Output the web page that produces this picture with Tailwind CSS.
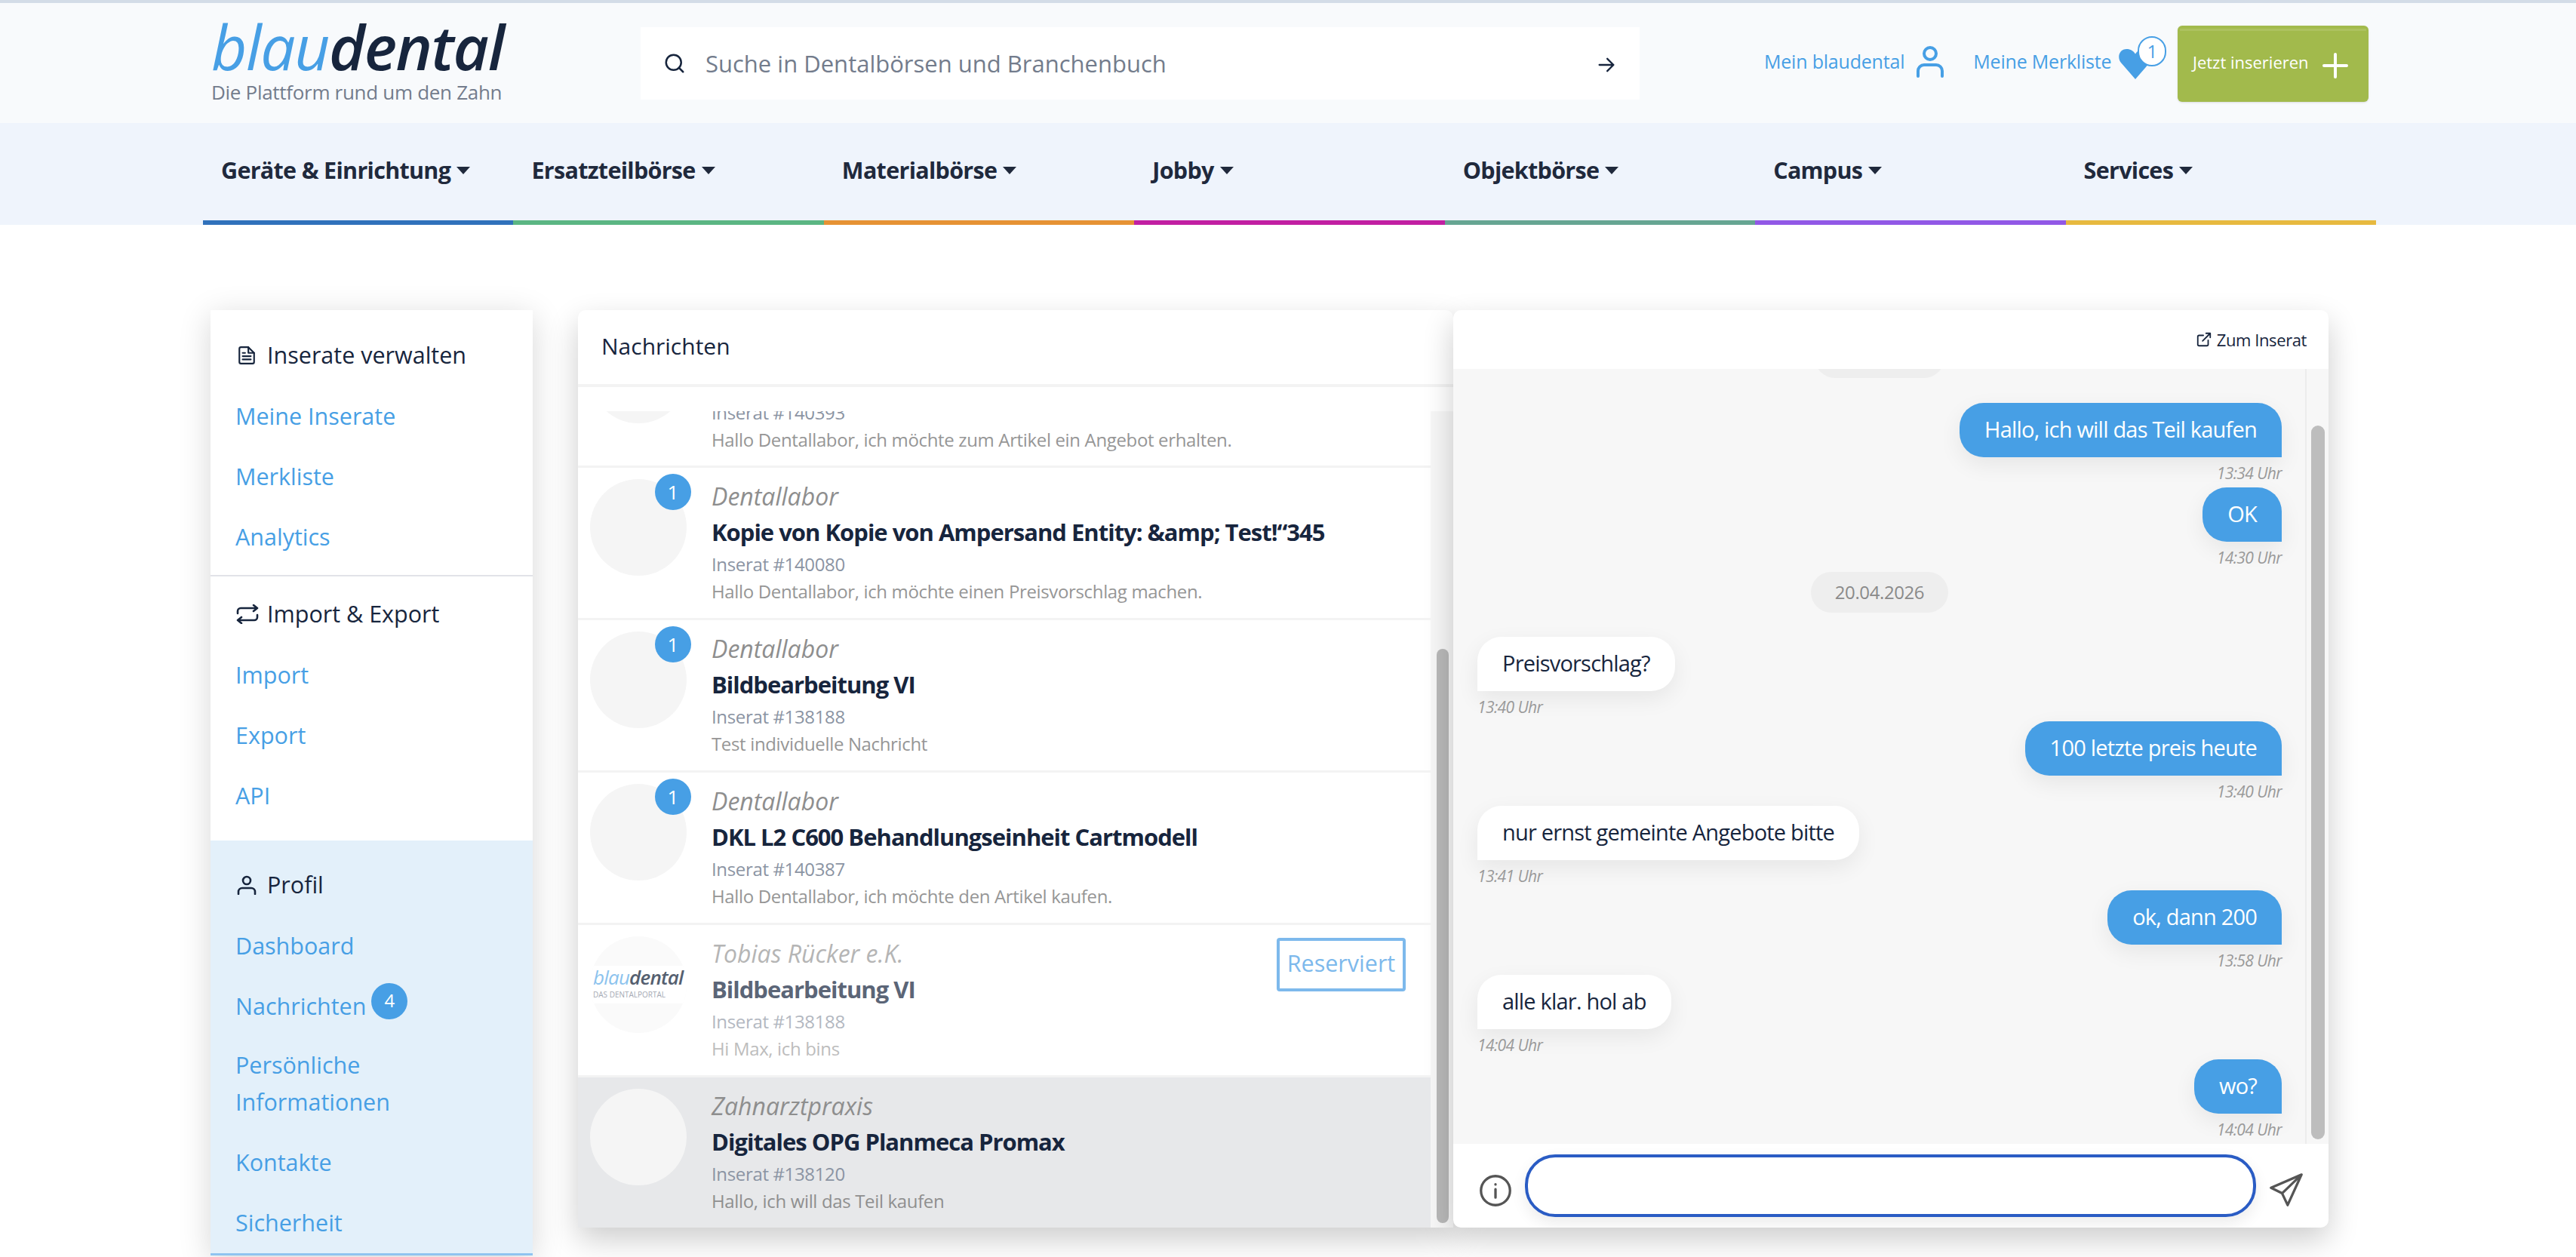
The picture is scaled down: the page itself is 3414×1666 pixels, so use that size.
<!DOCTYPE html>
<html lang="de">

<head>
    <meta charset="UTF-8">
    <meta name="viewport" content="width=device-width, initial-scale=1.0">
    <title>Nachrichten | blaudental</title>
    <script src="https://cdn.jsdelivr.net/npm/@tailwindcss/browser@4"></script>
</head>

<body class="bg-white font-['Open_Sans',sans-serif] h-[1666px] overflow-hidden text-[#17253d]">
    <!-- Kopfzeile -->
    <header class="bg-[#f8fafc] border-t-4 border-[#d3dce7] h-[163px] flex relative">
        <a href="#" class="ml-[280px] mt-[22px] w-[400px] shrink-0">
            <div class="text-[82px] leading-[70px] italic font-semibold tracking-[-1.4px]"><span class="inline-block text-[#479fe5] font-normal">blau</span><span class="inline-block">dental</span></div>
            <div class="text-[26px] leading-[28px] text-[#737c8c] mt-[12px] tracking-[-0.3px]">Die Plattform rund um den Zahn</div>
        </a>
        <div class="ml-[169px] mt-[32px] w-[1324px] h-[96px] bg-white flex items-center px-[30px] shrink-0">
            <svg width="30" height="30" viewBox="0 0 24 24" fill="none" stroke="#17253d" stroke-width="2" stroke-linecap="round"><circle cx="11" cy="11" r="8" /><path d="m21 21-4.3-4.3" /></svg>
            <span class="ml-[26px] text-[31px] text-[#737c8c] flex-1">Suche in Dentalbörsen und Branchenbuch</span>
            <svg class="mt-[3px]" width="28" height="28" viewBox="0 0 24 24" fill="none" stroke="#17253d" stroke-width="2" stroke-linecap="round" stroke-linejoin="round"><path d="M4 12h16M13 5l7 7-7 7" /></svg>
        </div>
        <div class="ml-[165px] flex items-center h-[159px] pb-[3px] text-[#479fe5] text-[25px] tracking-[-0.2px] shrink-0">
            <span>Mein blaudental</span>
            <svg class="ml-[16px]" width="36" height="42" viewBox="0 0 36 42" fill="none" stroke="#479fe5" stroke-width="4" stroke-linecap="round"><circle cx="18" cy="10" r="8" /><path d="M2 40V33a8 8 0 0 1 8-8h16a8 8 0 0 1 8 8v7" /></svg>
            <span class="ml-[39px]">Meine Merkliste</span>
            <div class="relative ml-[9px] w-[46px] h-[42px] mt-[4px]">
                <svg width="46" height="42" viewBox="0 0 24 22" fill="#479fe5"><path d="M12 22 2 10.500C-1 6.500 1 1 6 1c2.500 0 4.800 1.300 6 3.500C13.200 2.300 15.500 1 18 1c5 0 7 5.500 4 9.500Z" /></svg>
                <span class="absolute left-[26px] top-[-15px] w-[38px] h-[40px] rounded-full bg-white border-2 border-[#479fe5] text-[24px] leading-[36px] text-center">1</span>
            </div>
        </div>
        <a href="#" class="absolute left-[2886px] top-[30px] w-[253px] h-[101px] bg-[#a2ba4c] rounded-[6px] shadow-sm flex items-start pt-[32px] pl-[20px] text-white text-[22px]">
            <span class="absolute left-[3px] right-[3px] top-[4px] h-[3px] bg-[#adc25f]"></span>
            <span>Jetzt inserieren</span>
            <svg class="ml-[18px] mt-[4px]" width="34" height="34" viewBox="0 0 34 34" stroke="#fff" stroke-width="4" stroke-linecap="round"><path d="M17 2v30M2 17h30" /></svg>
        </a>
    </header>
    <!-- Hauptnavigation -->
    <nav class="bg-[#eff4fc] h-[135px]">
        <ul class="ml-[269px] w-[2880px] grid grid-cols-7 h-full text-[30.5px] font-bold tracking-[-0.7px] text-[#20293c]">
            <li class="border-b-[6px] border-[#3071bb] pl-[24px] pt-[40px]">Geräte &amp; Einrichtung<i class="inline-block ml-[8px] align-middle border-x-[9px] border-x-transparent border-t-[10px] border-t-[#20293c] -mt-[6px]"></i></li>
            <li class="border-b-[6px] border-[#5bb683] pl-[24px] pt-[40px]">Ersatzteilbörse<i class="inline-block ml-[8px] align-middle border-x-[9px] border-x-transparent border-t-[10px] border-t-[#20293c] -mt-[6px]"></i></li>
            <li class="border-b-[6px] border-[#e69234] pl-[24px] pt-[40px]">Materialbörse<i class="inline-block ml-[8px] align-middle border-x-[9px] border-x-transparent border-t-[10px] border-t-[#20293c] -mt-[6px]"></i></li>
            <li class="border-b-[6px] border-[#c11fa2] pl-[24px] pt-[40px]">Jobby<i class="inline-block ml-[8px] align-middle border-x-[9px] border-x-transparent border-t-[10px] border-t-[#20293c] -mt-[6px]"></i></li>
            <li class="border-b-[6px] border-[#66a592] pl-[24px] pt-[40px]">Objektbörse<i class="inline-block ml-[8px] align-middle border-x-[9px] border-x-transparent border-t-[10px] border-t-[#20293c] -mt-[6px]"></i></li>
            <li class="border-b-[6px] border-[#9158e6] pl-[24px] pt-[40px]">Campus<i class="inline-block ml-[8px] align-middle border-x-[9px] border-x-transparent border-t-[10px] border-t-[#20293c] -mt-[6px]"></i></li>
            <li class="border-b-[6px] border-[#e7b93f] pl-[24px] pt-[40px]">Services<i class="inline-block ml-[8px] align-middle border-x-[9px] border-x-transparent border-t-[10px] border-t-[#20293c] -mt-[6px]"></i></li>
        </ul>
    </nav>

    <main class="flex items-start ml-[279px] mt-[113px]">
        <!-- Seitenleiste -->
        <aside class="w-[427px] shrink-0 bg-white shadow-[0_8px_40px_rgba(0,0,0,0.16)] text-[30.5px] text-[#479fe5]">
            <section class="h-[353px] border-b-2 border-[#e2e3e8] pl-[33px] pt-[20px]">
                <h3 class="h-[80px] flex items-center text-[#17253d]"><svg class="ml-[2px]" width="26" height="26" viewBox="0 0 24 24" fill="none" stroke="currentColor" stroke-width="2" stroke-linejoin="round" stroke-linecap="round"><path d="M14 2H5a2 2 0 0 0-2 2v16a2 2 0 0 0 2 2h14a2 2 0 0 0 2-2V9z" /><path d="M14 2v7h7M7 13h10M7 17h10M7 9h3" /></svg><span class="ml-[14px]">Inserate verwalten</span></h3>
                <a class="block h-[80px] leading-[80px]" href="#">Meine Inserate</a>
                <a class="block h-[80px] leading-[80px]" href="#">Merkliste</a>
                <a class="block h-[80px] leading-[80px]" href="#">Analytics</a>
            </section>
            <section class="h-[350px] pl-[33px] pt-[10px]">
                <h3 class="h-[80px] flex items-center text-[#17253d]"><svg class="ml-[1px]" width="30" height="26" viewBox="0 0 30 26" fill="none" stroke="currentColor" stroke-width="2.600" stroke-linejoin="round" stroke-linecap="round"><path d="M2 12V9a4 4 0 0 1 4-4h22M23 1l5 4-5 4M28 14v3a4 4 0 0 1-4 4H2M7 25l-5-4 5-4" /></svg><span class="ml-[11px]">Import &amp; Export</span></h3>
                <a class="block h-[80px] leading-[80px]" href="#">Import</a>
                <a class="block h-[80px] leading-[80px]" href="#">Export</a>
                <a class="block h-[80px] leading-[80px]" href="#">API</a>
            </section>
            <section class="bg-[#e3f0fa] h-[550px] border-b-[3px] border-[#8fc4f0] pl-[33px] pt-[19px]">
                <h3 class="h-[80px] flex items-center text-[#17253d]"><svg class="ml-[2px]" width="26" height="26" viewBox="0 0 26 26" fill="none" stroke="currentColor" stroke-width="2.600" stroke-linecap="round"><circle cx="13" cy="7" r="5" /><path d="M2 25v-3a5 5 0 0 1 5-5h12a5 5 0 0 1 5 5v3" /></svg><span class="ml-[14px]">Profil</span></h3>
                <a class="block h-[80px] leading-[80px]" href="#">Dashboard</a>
                <a class="flex h-[80px] leading-[80px]" href="#">Nachrichten<span class="ml-[7px] mt-[10px] w-[48px] h-[48px] rounded-full bg-[#479fe5] text-white text-[24px] leading-[46px] font-medium text-center">4</span></a>
                <a class="block mt-[14px] w-[300px] leading-[49px]" href="#">Persönliche Informationen</a>
                <a class="block mt-[15px] h-[80px] leading-[80px]" href="#">Kontakte</a>
                <a class="block h-[80px] leading-[80px]" href="#">Sicherheit</a>
            </section>
        </aside>

        <!-- Nachrichtenliste -->
        <section class="ml-[60px] w-[1160px] shrink-0 h-[1216px] bg-white rounded-t-[10px] shadow-[0_16px_40px_rgba(0,0,0,0.2)] flex flex-col">
            <h2 class="h-[102px] flex items-center pl-[31px] pb-[3px] text-[30px] border-b-4 border-[#f3f3f3] shrink-0">Nachrichten</h2>
            <div class="h-[32px] shrink-0"></div>
            <div class="flex flex-1 min-h-0">
                <ul class="flex-1 overflow-hidden">
                    <div class="-mt-[127px] h-[202px] border-b-[3px] border-[#f3f3f3] flex pl-[16px]">
                        <div class="mt-[15px] w-[128px] h-[128px] rounded-full bg-[#f5f5f5] shrink-0"></div>
                        <div class="ml-[33px] self-end pb-[16px]">
                            <div class="text-[24px] leading-[36px] tracking-[-0.35px] text-[#8b94a3]">Inserat #140393</div>
                            <div class="text-[24px] leading-[36px] tracking-[-0.35px] text-[#969696]">Hallo Dentallabor, ich möchte zum Artikel ein Angebot erhalten.</div>
                        </div>
                    </div>
                    <li class="relative h-[202px] border-b-[3px] border-[#f3f3f3] flex pl-[16px]">
                        <div class="mt-[15px] w-[128px] h-[128px] rounded-full bg-[#f5f5f5] shrink-0"></div>
                        <span class="absolute left-[102px] top-[8px] w-[48px] h-[48px] rounded-full bg-[#479fe5] text-white text-[26px] leading-[48px] text-center">1</span>
                        <div class="ml-[33px] pt-[16px]">
                            <div class="text-[32px] leading-[44px] italic text-[#8e8e8e]">Dentallabor</div>
                            <div class="text-[31px] leading-[50px] tracking-[-1px] font-bold text-[#17253d]">Kopie von Kopie von Ampersand Entity: &amp;amp; Test!“345</div>
                            <div class="text-[24px] leading-[36px] tracking-[-0.35px] text-[#8b94a3]">Inserat #140080</div>
                            <div class="text-[24px] leading-[36px] tracking-[-0.35px] text-[#969696]">Hallo Dentallabor, ich möchte einen Preisvorschlag machen.</div>
                        </div>
                    </li>
                    <li class="relative h-[202px] border-b-[3px] border-[#f3f3f3] flex pl-[16px]">
                        <div class="mt-[15px] w-[128px] h-[128px] rounded-full bg-[#f5f5f5] shrink-0"></div>
                        <span class="absolute left-[102px] top-[8px] w-[48px] h-[48px] rounded-full bg-[#479fe5] text-white text-[26px] leading-[48px] text-center">1</span>
                        <div class="ml-[33px] pt-[16px]">
                            <div class="text-[32px] leading-[44px] italic text-[#8e8e8e]">Dentallabor</div>
                            <div class="text-[31px] leading-[50px] tracking-[-1px] font-bold text-[#17253d]">Bildbearbeitung VI</div>
                            <div class="text-[24px] leading-[36px] tracking-[-0.35px] text-[#8b94a3]">Inserat #138188</div>
                            <div class="text-[24px] leading-[36px] tracking-[-0.35px] text-[#969696]">Test individuelle Nachricht</div>
                        </div>
                    </li>
                    <li class="relative h-[202px] border-b-[3px] border-[#f3f3f3] flex pl-[16px]">
                        <div class="mt-[15px] w-[128px] h-[128px] rounded-full bg-[#f5f5f5] shrink-0"></div>
                        <span class="absolute left-[102px] top-[8px] w-[48px] h-[48px] rounded-full bg-[#479fe5] text-white text-[26px] leading-[48px] text-center">1</span>
                        <div class="ml-[33px] pt-[16px]">
                            <div class="text-[32px] leading-[44px] italic text-[#8e8e8e]">Dentallabor</div>
                            <div class="text-[31px] leading-[50px] tracking-[-1px] font-bold text-[#17253d]">DKL L2 C600 Behandlungseinheit Cartmodell</div>
                            <div class="text-[24px] leading-[36px] tracking-[-0.35px] text-[#8b94a3]">Inserat #140387</div>
                            <div class="text-[24px] leading-[36px] tracking-[-0.35px] text-[#969696]">Hallo Dentallabor, ich möchte den Artikel kaufen.</div>
                        </div>
                    </li>
                    <li class="relative h-[202px] border-b-[3px] border-[#f3f3f3] flex pl-[16px]">
                        <div class="mt-[15px] w-[128px] h-[128px] rounded-full bg-[#fafafa] shrink-0 flex items-center overflow-hidden">
                            <div class="w-full h-[50px] bg-white pl-[4px]">
                                <div class="text-[26px] leading-[30px] italic tracking-[-0.8px] text-[#8cc3ee] whitespace-nowrap">blau<span class="text-[#555f70] font-semibold">dental</span></div>
                                <div class="text-[10px] leading-[16px] text-[#a4a9b3] whitespace-nowrap">DAS DENTALPORTAL</div>
                            </div>
                        </div>
                        <div class="ml-[33px] pt-[16px] flex-1">
                            <div class="text-[32px] leading-[44px] italic text-[#b5b5b5]">Tobias Rücker e.K.</div>
                            <div class="text-[31px] leading-[50px] tracking-[-1px] font-bold text-[#5b6577]">Bildbearbeitung VI</div>
                            <div class="text-[24px] leading-[36px] tracking-[-0.35px] text-[#b3b8c1]">Inserat #138188</div>
                            <div class="text-[24px] leading-[36px] tracking-[-0.35px] text-[#bdbdbd]">Hi Max, ich bins</div>
                        </div>
                        <span class="absolute left-[926px] top-[17px] w-[171px] h-[71px] border-4 border-[#7db9ec] rounded-[4px] text-[#7db9ec] text-[30.5px] leading-[58px] text-center">Reserviert</span>
                    </li>
                    <li class="relative h-[202px] bg-[#e7e8ea] flex pl-[16px]">
                        <div class="mt-[15px] w-[128px] h-[128px] rounded-full bg-[#f5f5f5] shrink-0"></div>
                        <div class="ml-[33px] pt-[16px]">
                            <div class="text-[32px] leading-[44px] italic text-[#8e8e8e]">Zahnarztpraxis</div>
                            <div class="text-[31px] leading-[50px] tracking-[-1px] font-bold text-[#17253d]">Digitales OPG Planmeca Promax</div>
                            <div class="text-[24px] leading-[36px] tracking-[-0.35px] text-[#8b94a3]">Inserat #138120</div>
                            <div class="text-[24px] leading-[36px] tracking-[-0.35px] text-[#8f8f8f]">Hallo, ich will das Teil kaufen</div>
                        </div>
                    </li>
                </ul>
                <!-- Scrollbalken -->
                <div class="w-[30px] shrink-0 bg-[#f7f7f7] pl-[8px] pr-[6px] pt-[315px] pb-[6px]">
                    <div class="h-full rounded-full bg-[#b9b9b9]"></div>
                </div>
            </div>
        </section>

        <!-- Unterhaltung -->
        <section class="w-[1160px] shrink-0 h-[1216px] rounded-[10px] bg-white shadow-[0_16px_40px_rgba(0,0,0,0.2)] flex flex-col overflow-hidden">
            <div class="h-[78px] shrink-0 flex items-center justify-end pr-[29px] text-[22px] tracking-[-0.4px]">
                <svg class="mr-[6px]" width="22" height="22" viewBox="0 0 24 24" fill="none" stroke="currentColor" stroke-width="2" stroke-linecap="round" stroke-linejoin="round"><path d="M18 13v6a2 2 0 0 1-2 2H5a2 2 0 0 1-2-2V8a2 2 0 0 1 2-2h6M15 3h6v6M10 14 21 3" /></svg>
                Zum Inserat
            </div>
            <div class="flex flex-1 min-h-0 bg-[#f7f7f7]">
                <div class="flex-1 overflow-hidden border-r-2 border-[#ececec] pl-[32px] pr-[31px]">
                    <div class="-mt-[42px] mx-auto w-[172px] h-[54px] rounded-[27px] bg-[#eeeeee]"></div>
                    <div class="mt-[33px] flex flex-col items-end">
                        <div class="h-[72px] px-[33px] leading-[70px] text-[29px] tracking-[-0.8px] text-white bg-[#479fe5] rounded-[32px] rounded-br-none shadow-[0_10px_30px_rgba(0,0,0,0.07)]">Hallo, ich will das Teil kaufen</div>
                        <div class="h-[40px] pt-[8px] leading-[26px] text-[21px] tracking-[-0.6px] italic text-[#999]">13:34 Uhr</div>
                        <div class="h-[72px] px-[33px] leading-[70px] text-[29px] tracking-[-0.8px] text-white bg-[#479fe5] rounded-[32px] rounded-br-none shadow-[0_10px_30px_rgba(0,0,0,0.07)]">OK</div>
                        <div class="h-[40px] pt-[8px] leading-[26px] text-[21px] tracking-[-0.6px] italic text-[#999]">14:30 Uhr</div>
                    </div>
                    <div class="mx-auto w-[182px] h-[54px] rounded-[27px] bg-[#eeeeee] text-[#8a8a8a] text-[24px] tracking-[-0.4px] leading-[54px] text-center">20.04.2026</div>
                    <div class="mt-[32px] flex flex-col items-start">
                        <div class="h-[72px] px-[33px] leading-[70px] text-[29px] tracking-[-0.8px] bg-white rounded-[32px] rounded-bl-none shadow-[0_10px_30px_rgba(0,0,0,0.07)]">Preisvorschlag?</div>
                        <div class="h-[40px] pt-[8px] leading-[26px] text-[21px] tracking-[-0.6px] italic text-[#999]">13:40 Uhr</div>
                    </div>
                    <div class="flex flex-col items-end">
                        <div class="h-[72px] px-[33px] leading-[70px] text-[29px] tracking-[-0.8px] text-white bg-[#479fe5] rounded-[32px] rounded-br-none shadow-[0_10px_30px_rgba(0,0,0,0.07)]">100 letzte preis heute</div>
                        <div class="h-[40px] pt-[8px] leading-[26px] text-[21px] tracking-[-0.6px] italic text-[#999]">13:40 Uhr</div>
                    </div>
                    <div class="flex flex-col items-start">
                        <div class="h-[72px] px-[33px] leading-[70px] text-[29px] tracking-[-0.8px] bg-white rounded-[32px] rounded-bl-none shadow-[0_10px_30px_rgba(0,0,0,0.07)]">nur ernst gemeinte Angebote bitte</div>
                        <div class="h-[40px] pt-[8px] leading-[26px] text-[21px] tracking-[-0.6px] italic text-[#999]">13:41 Uhr</div>
                    </div>
                    <div class="flex flex-col items-end">
                        <div class="h-[72px] px-[33px] leading-[70px] text-[29px] tracking-[-0.8px] text-white bg-[#479fe5] rounded-[32px] rounded-br-none shadow-[0_10px_30px_rgba(0,0,0,0.07)]">ok, dann 200</div>
                        <div class="h-[40px] pt-[8px] leading-[26px] text-[21px] tracking-[-0.6px] italic text-[#999]">13:58 Uhr</div>
                    </div>
                    <div class="flex flex-col items-start">
                        <div class="h-[72px] px-[33px] leading-[70px] text-[29px] tracking-[-0.8px] bg-white rounded-[32px] rounded-bl-none shadow-[0_10px_30px_rgba(0,0,0,0.07)]">alle klar. hol ab</div>
                        <div class="h-[40px] pt-[8px] leading-[26px] text-[21px] tracking-[-0.6px] italic text-[#999]">14:04 Uhr</div>
                    </div>
                    <div class="flex flex-col items-end">
                        <div class="h-[72px] px-[33px] leading-[70px] text-[29px] tracking-[-0.8px] text-white bg-[#479fe5] rounded-[32px] rounded-br-none shadow-[0_10px_30px_rgba(0,0,0,0.07)]">wo?</div>
                        <div class="h-[40px] pt-[8px] leading-[26px] text-[21px] tracking-[-0.6px] italic text-[#999]">14:04 Uhr</div>
                    </div>
                </div>
                <div class="w-[29px] shrink-0 pl-[6px] pr-[5px] pt-[75px] pb-[6px]">
                    <div class="h-full rounded-full bg-[#bdbdbd]"></div>
                </div>
            </div>
            <div class="h-[111px] shrink-0 flex items-center pl-[34px] pr-[34px]">
                <svg class="mt-[12px]" width="44" height="44" viewBox="0 0 24 24" fill="none" stroke="#555" stroke-width="1.800" stroke-linecap="round"><circle cx="12" cy="12" r="10.500" /><path d="M12 11v6M12 7.500v.1" /></svg>
                <div class="ml-[17px] w-[969px] h-[83px] rounded-[40px] bg-white border-4 border-[#2a5cc4] shadow-[0_8px_20px_rgba(0,0,0,0.08)]"></div>
                <svg class="ml-[18px] mt-[10px]" width="44" height="46" viewBox="0 0 24 24" fill="none" stroke="#555" stroke-width="1.800" stroke-linejoin="round"><path d="M23 1 1 10.500l8 4 4 8.500zM23 1 9 14.500" /></svg>
            </div>
        </section>
    </main>
</body>

</html>
